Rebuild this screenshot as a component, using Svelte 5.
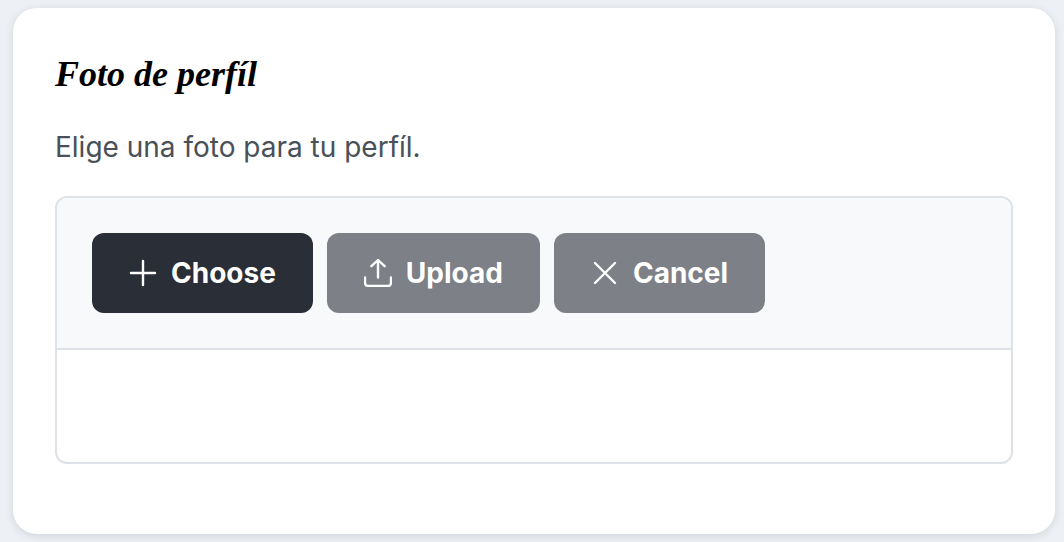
<script>
  const choose = () => picker.click();
  let picker;
</script>

<main>
  <section class="card">
    <h1>Foto de perfíl</h1>
    <p>Elige una foto para tu perfíl.</p>

    <div class="uploader">
      <div class="toolbar">
        <button type="button" onclick={choose}>
          <svg viewBox="0 0 28 28" aria-hidden="true">
            <path d="M14 2v24M2 14h24" />
          </svg>
          <span>Choose</span>
        </button>
        <button type="button" disabled>
          <svg viewBox="0 0 28 28" aria-hidden="true">
            <path d="M14 18.5V1.5M7.4 7.2 14 1l6.600 6.200M1 18.500v5.500a3 3 0 0 0 3 3h20a3 3 0 0 0 3-3v-5.500" />
          </svg>
          <span>Upload</span>
        </button>
        <button type="button" disabled>
          <svg viewBox="0 0 28 28" aria-hidden="true">
            <path d="m4 4 20 20M24 4 4 24" />
          </svg>
          <span>Cancel</span>
        </button>
        <input type="file" accept="image/*" aria-label="Foto de perfíl" hidden bind:this={picker} />
      </div>
      <div class="content"></div>
    </div>
  </section>
</main>

<style>
  :global(body) {
    background: #edf1f6;
  }

  main {
    padding: 8px 9px 8px 13px;
    font-family: Inter, sans-serif;
    font-size: 28px;
  }

  .card {
    padding: 42px 42px 70px;
    border-radius: 24px;
    background: #fff;
    box-shadow: 0 2px 10px rgba(0, 0, 0, 0.12);
  }

  h1 {
    margin: 0 0 28px;
    font-family: "Liberation Serif", serif;
    font-size: 36px;
    font-style: italic;
    font-weight: 700;
    line-height: 48px;
    color: #000;
  }

  p {
    margin: 0 0 28px;
    line-height: 42px;
    color: #495057;
  }

  .uploader {
    overflow: hidden;
    border: 2px solid #dee2e6;
    border-radius: 12px;
  }

  .toolbar {
    display: flex;
    flex-wrap: wrap;
    gap: 14px;
    padding: 35px;
    border-bottom: 2px solid #dee2e6;
    background: #f8f9fb;
  }

  .content {
    min-height: 112px;
  }

  button {
    display: flex;
    align-items: center;
    gap: 14px;
    padding: 20px 37px;
    border: 0;
    border-radius: 12px;
    background: #2a2e37;
    color: #fff;
    font: inherit;
    font-weight: 700;
    line-height: 40px;
    cursor: pointer;
  }

  button:disabled {
    background: #7d8087;
    cursor: default;
  }

  svg {
    width: 28px;
    height: 28px;
    fill: none;
    stroke: currentColor;
    stroke-width: 2.4;
    stroke-linecap: round;
    stroke-linejoin: round;
  }
</style>
